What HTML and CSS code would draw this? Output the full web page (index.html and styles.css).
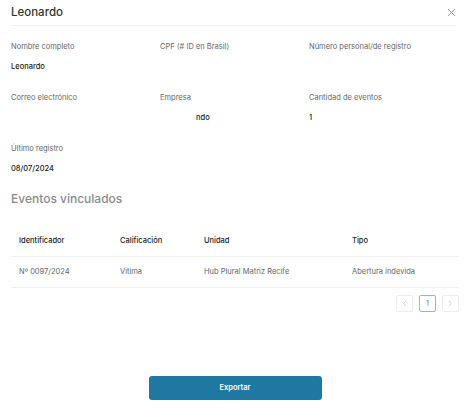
FILE: index.html
```html
<!DOCTYPE html>
<html lang="es">
<head>
<meta charset="utf-8">
<title>Leonardo</title>
<link rel="stylesheet" href="styles.css">
</head>
<body>
<div class="modal">
  <div class="header">
    <div class="title">Leonardo</div>
    <svg class="close" width="9" height="9" viewBox="0 0 9 9"><path d="M1 1L8 8M8 1L1 8" stroke="#999" stroke-width="1" fill="none"/></svg>
  </div>
  <div class="fields">
    <div class="field"><div class="label">Nombre completo</div><div class="value">Leonardo</div></div>
    <div class="field"><div class="label">CPF (# ID en Brasil)</div><div class="value"></div></div>
    <div class="field"><div class="label">Número personal/de registro</div><div class="value"></div></div>
    <div class="field"><div class="label">Correo electrónico</div><div class="value"></div></div>
    <div class="field"><div class="label">Empresa</div><div class="value"><span class="partial">ndo</span></div></div>
    <div class="field"><div class="label">Cantidad de eventos</div><div class="value">1</div></div>
    <div class="field"><div class="label">Último registro</div><div class="value">08/07/2024</div></div>
  </div>
  <h2 class="section">Eventos vinculados</h2>
  <table class="table">
    <thead>
      <tr><th class="c1">Identificador</th><th class="c2">Calificación</th><th class="c3">Unidad</th><th>Tipo</th></tr>
    </thead>
    <tbody>
      <tr><td>Nº 0097/2024</td><td>Vitima</td><td>Hub Plural Matriz Recife</td><td>Abertura indevida</td></tr>
    </tbody>
  </table>
  <div class="pager">
    <span class="pg disabled"><svg width="5" height="7" viewBox="0 0 5 7"><path d="M4 1L1.5 3.5L4 6" stroke="#ccc" fill="none"/></svg></span>
    <span class="pg active">1</span>
    <span class="pg disabled"><svg width="5" height="7" viewBox="0 0 5 7"><path d="M1 1L3.5 3.5L1 6" stroke="#ccc" fill="none"/></svg></span>
  </div>
  <div class="footer">
    <button class="btn">Exportar</button>
  </div>
</div>
</body>
</html>
```
FILE: styles.css
```css
* { box-sizing: border-box; }
html, body { margin: 0; padding: 0; background: #fff; }
body { font-family: Inter, "Noto Sans", sans-serif; color: #222; }
.modal { padding: 0 8px 0 11px; }
.header {
  height: 26px;
  display: flex;
  align-items: center;
  justify-content: space-between;
  border-bottom: 1px solid #f2f2f2;
  margin-right: 3px;
}
.title { font-size: 11.5px; font-weight: 500; color: #333; line-height: 14px; margin-top: -1px; }
.fields {
  display: grid;
  grid-template-columns: 149px 149px 1fr;
  row-gap: 21px;
  padding-top: 16px;
}
.label { font-size: 7.5px; line-height: 10px; color: #666; }
.value { font-size: 7.5px; line-height: 10px; margin-top: 10px; height: 10px; font-weight: 500; color: #222; }
.partial { display: inline-block; margin-left: 36px; }
.section { font-size: 12px; line-height: 16px; font-weight: 500; color: #8a8a8a; margin: 17px 0 0; }
.table { width: 100%; border-collapse: collapse; margin-top: 18px; font-size: 7.5px; }
.table th, .table td { text-align: left; padding: 0 0 0 8px; height: 31px; border-bottom: 1px solid #f0f0f0; }
.table th { font-weight: 500; color: #222; }
.table td { color: #666; }
.c1 { width: 101px; }
.c2 { width: 84px; }
.c3 { width: 148px; }
.pager { display: flex; justify-content: flex-end; gap: 6px; margin-top: 7px; }
.pg {
  width: 17px; height: 17px;
  border: 1px solid #ececec;
  border-radius: 2px;
  display: flex; align-items: center; justify-content: center;
  font-size: 8px; color: #5b9bd5;
}
.pg.active { border-color: #8ab6e3; }
.footer { display: flex; justify-content: center; margin-top: 64px; }
.btn {
  width: 173px; height: 24px;
  background: #1f78a1;
  color: #fff;
  border: none;
  border-radius: 3px;
  font-family: Inter, "Noto Sans", sans-serif;
  font-size: 7.5px;
  font-weight: 600;
}
```
